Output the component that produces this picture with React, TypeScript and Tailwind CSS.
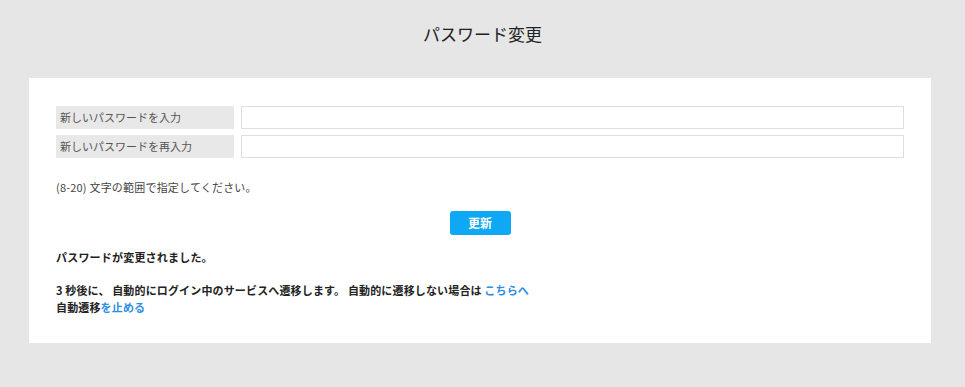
import React from 'react';

export default function App() {
    const fields = ["新しいパスワードを入力", "新しいパスワードを再入力"];

    return (
        <div className="min-h-screen w-full bg-[#e6e6e6] pt-[22px] pb-[40px] font-['Noto_Sans_CJK_JP','Noto_Sans',sans-serif]">
            <h1 className="text-center text-[17px] leading-[24px] text-[#222] font-normal">パスワード変更</h1>

            <div className="mt-[32px] ml-[29px] w-[902px] bg-white px-[27px] pt-[28px] pb-[27px]">
                {/* Form rows */}
                <div className="flex flex-col gap-[6px]">
                    {fields.map((label, i) => (
                        <div key={i} className="flex h-[23px] gap-[7px]">
                            <div className="w-[178px] bg-[#e8e8e8] pl-[4px] flex items-center text-[11px] text-[#555]">{label}</div>
                            <input type="password" className="flex-1 border border-[#dedede] bg-white outline-none" />
                        </div>
                    ))}
                </div>

                <p className="mt-[21px] text-[11px] leading-[16px] tracking-[0.2px] text-[#444]">(8-20) 文字の範囲で指定してください。</p>

                <div className="mt-[16px] flex justify-center">
                    <button className="w-[61px] h-[24px] rounded-[3px] bg-[#0ea8f5] text-white text-[12px] font-bold">更新</button>
                </div>

                <p className="mt-[14px] text-[11px] leading-[16px] tracking-[0.2px] font-bold text-[#222]">パスワードが変更されました。</p>

                <div className="mt-[17px] text-[11px] leading-[17px] tracking-[0.15px] font-bold text-[#222]">
                    <p>
                        3 秒後に、 自動的にログイン中のサービスへ遷移します。 自動的に遷移しない場合は <a href="#" className="text-[#2b8de4]">こちらへ</a>
                    </p>
                    <p>
                        自動遷移<a href="#" className="text-[#2b8de4]">を止める</a>
                    </p>
                </div>
            </div>
        </div>
    );
}
